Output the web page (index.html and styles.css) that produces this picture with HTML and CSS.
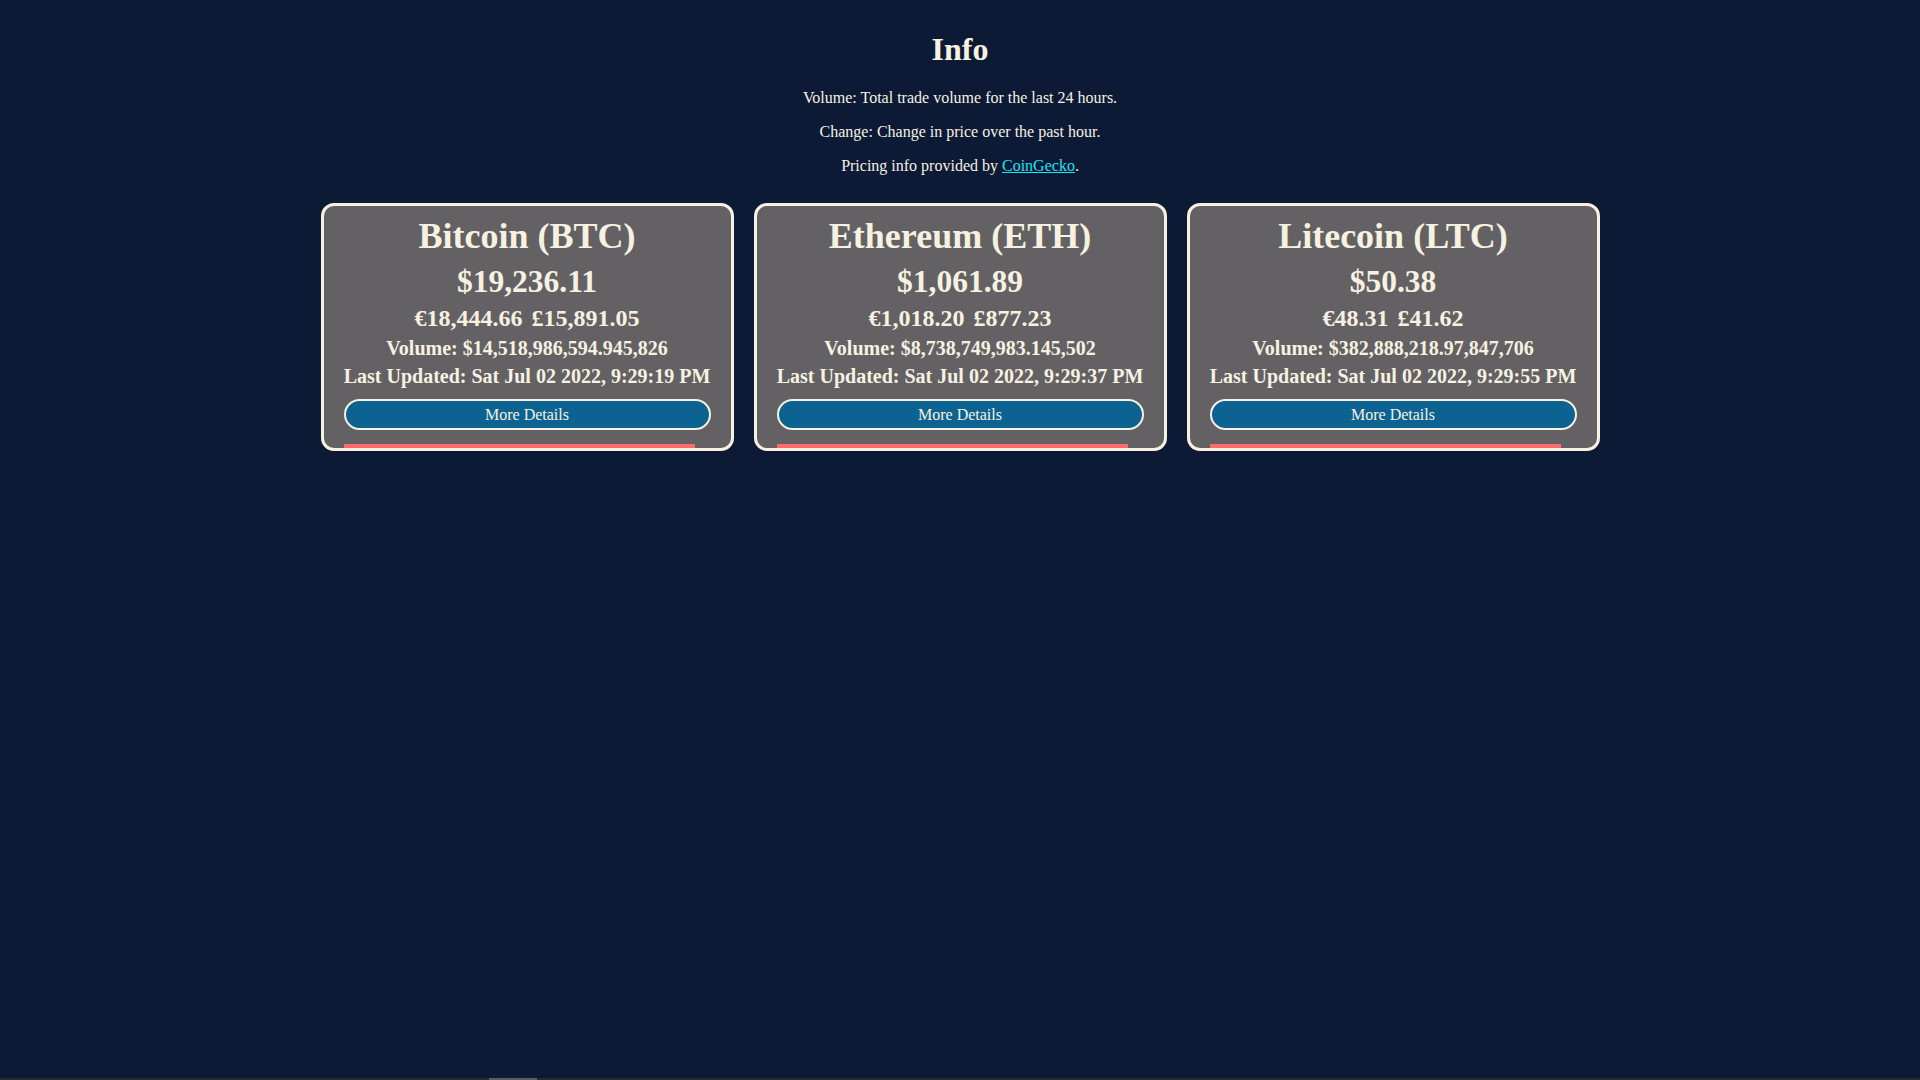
FILE: index.html
```html
<!DOCTYPE html>
<html lang="en">
<head>
<meta charset="utf-8">
<title>Crypto Info</title>
<link rel="stylesheet" href="styles.css">
</head>
<body>
<header class="info">
  <h1 class="info-title">Info</h1>
  <p class="info-line">Volume: Total trade volume for the last 24 hours.</p>
  <p class="info-line">Change: Change in price over the past hour.</p>
  <p class="info-line">Pricing info provided by <a class="info-link" href="#">CoinGecko</a>.</p>
</header>
<main class="cards">
  <section class="card">
    <h2 class="card-title">Bitcoin (BTC)</h2>
    <div class="card-price">$19,236.11</div>
    <div class="card-alt"><span>€18,444.66</span><span>£15,891.05</span></div>
    <div class="card-meta">Volume: $14,518,986,594.945,826</div>
    <div class="card-meta">Last Updated: Sat Jul 02 2022, 9:29:19 PM</div>
    <button class="card-btn">More Details</button>
    <div class="card-bar"></div>
  </section>
  <section class="card">
    <h2 class="card-title">Ethereum (ETH)</h2>
    <div class="card-price">$1,061.89</div>
    <div class="card-alt"><span>€1,018.20</span><span>£877.23</span></div>
    <div class="card-meta">Volume: $8,738,749,983.145,502</div>
    <div class="card-meta">Last Updated: Sat Jul 02 2022, 9:29:37 PM</div>
    <button class="card-btn">More Details</button>
    <div class="card-bar"></div>
  </section>
  <section class="card">
    <h2 class="card-title">Litecoin (LTC)</h2>
    <div class="card-price">$50.38</div>
    <div class="card-alt"><span>€48.31</span><span>£41.62</span></div>
    <div class="card-meta">Volume: $382,888,218.97,847,706</div>
    <div class="card-meta">Last Updated: Sat Jul 02 2022, 9:29:55 PM</div>
    <button class="card-btn">More Details</button>
    <div class="card-bar"></div>
  </section>
</main>
<div class="scrollstrip"><div class="scrollthumb"></div></div>
</body>
</html>
```
FILE: styles.css
```css
html, body {
  background: #0c1a35;
}
body {
  margin: 8px;
  font-family: "Liberation Serif", "Times New Roman", serif;
  color: #f6f1e1;
}
.info {
  text-align: center;
}
.info-title {
  font-size: 32px;
  font-weight: bold;
  margin: 23px 0 21px;
}
.info-line {
  font-size: 16px;
  margin: 16px 0;
}
.info-link {
  color: #1ee6f0;
}
.cards {
  display: flex;
  justify-content: center;
  gap: 20px;
  margin-top: 28px;
}
.card {
  width: 413px;
  box-sizing: border-box;
  border: 3px solid #f6f1e1;
  border-radius: 13px;
  background: #646164;
  padding: 10px 20px 0;
  display: flex;
  flex-direction: column;
  align-items: center;
  text-align: center;
  overflow: hidden;
}
.card-title {
  font-size: 36px;
  font-weight: bold;
  margin: 0;
  line-height: 41px;
}
.card-price {
  font-size: 31.5px;
  font-weight: bold;
  line-height: 36px;
  margin-top: 7px;
}
.card-alt {
  font-size: 24px;
  font-weight: bold;
  line-height: 27px;
  margin-top: 5px;
  display: flex;
  gap: 9px;
}
.card-meta {
  font-size: 20px;
  font-weight: bold;
  line-height: 23px;
  margin-top: 5px;
}
.card-btn {
  margin-top: 11px;
  width: 100%;
  height: 31px;
  box-sizing: border-box;
  border: 2px solid #f6f1e1;
  border-radius: 16px;
  background: #0c6392;
  color: #f6f1e1;
  font-family: "Liberation Serif", "Times New Roman", serif;
  font-size: 16px;
  padding: 0;
}
.card-bar {
  align-self: flex-start;
  margin-top: 14px;
  width: 351px;
  height: 4px;
  background: #ff6b6b;
}
.scrollstrip {
  position: fixed;
  left: 0;
  right: 0;
  bottom: 0;
  height: 2px;
  background: #262a33;
}
.scrollthumb {
  position: absolute;
  left: 489px;
  width: 48px;
  top: 0;
  height: 2px;
  background: #5a5d63;
}
```
